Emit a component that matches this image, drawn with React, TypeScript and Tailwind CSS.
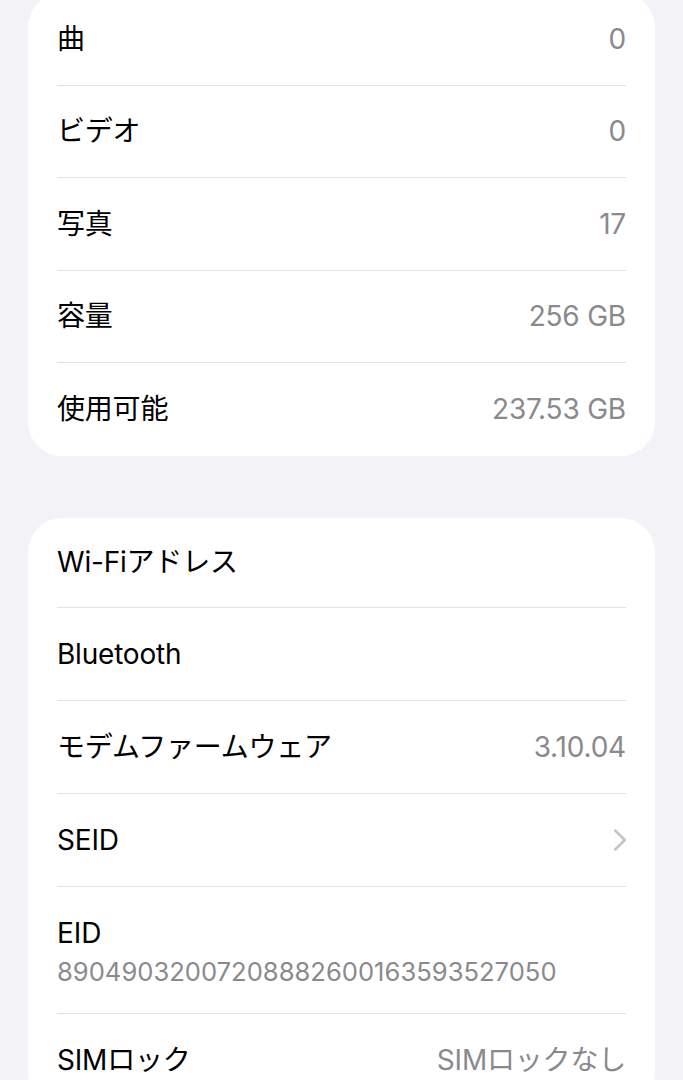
import { ChevronRight } from 'lucide-react';

type Row = { label: string; value?: string; chevron?: boolean; h: string };

const mediaRows: Row[] = [
  { label: '曲', value: '0', h: 'h-[92.5px]' },
  { label: 'ビデオ', value: '0', h: 'h-[92.5px]' },
  { label: '写真', value: '17', h: 'h-[92.5px]' },
  { label: '容量', value: '256 GB', h: 'h-[92.5px]' },
  { label: '使用可能', value: '237.53 GB', h: 'h-[92.5px]' },
];

const font = { fontFamily: 'Inter, "Noto Sans CJK JP", sans-serif' };

function SettingRow({ row, last }: { row: Row; last?: boolean }) {
  return (
    <div
      className={`flex items-center justify-between ${row.h} ${last ? '' : 'border-b border-[#e2e2e5]'}`}
    >
      <span className="text-[28px] text-black tracking-[-0.2px]">{row.label}</span>
      {row.value && <span className="text-[28px] text-[#8a8a8e] tracking-[-0.2px]">{row.value}</span>}
      {row.chevron && (
        <ChevronRight className="-mr-[13px] h-[38px] w-[38px] text-[#c4c4c7]" strokeWidth={1.6} />
      )}
    </div>
  );
}

export default function App() {
  return (
    <div className="min-h-screen overflow-hidden bg-[#f2f2f7]" style={font}>
      <div className="mx-7 -mt-[7px] rounded-[34px] bg-white px-[29px]">
        {mediaRows.map((row, i) => (
          <SettingRow key={row.label} row={row} last={i === mediaRows.length - 1} />
        ))}
      </div>

      <div className="mx-7 mt-[62px] rounded-[34px] bg-white px-[29px]">
        <SettingRow row={{ label: 'Wi-Fiアドレス', h: 'h-[90px]' }} />
        <SettingRow row={{ label: 'Bluetooth', h: 'h-[93px]' }} />
        <SettingRow row={{ label: 'モデムファームウェア', value: '3.10.04', h: 'h-[93px]' }} />
        <SettingRow row={{ label: 'SEID', chevron: true, h: 'h-[93px]' }} />
        <div className="flex h-[127px] flex-col border-b border-[#e2e2e5] pt-[29px]">
          <span className="text-[28px] leading-[34px] text-black">EID</span>
          <span className="mt-[7px] text-[25.6px] leading-[30px] text-[#8a8a8e]">
            89049032007208882600163593527050
          </span>
        </div>
        <SettingRow row={{ label: 'SIMロック', value: 'SIMロックなし', h: 'h-[93px]' }} last />
      </div>
    </div>
  );
}
